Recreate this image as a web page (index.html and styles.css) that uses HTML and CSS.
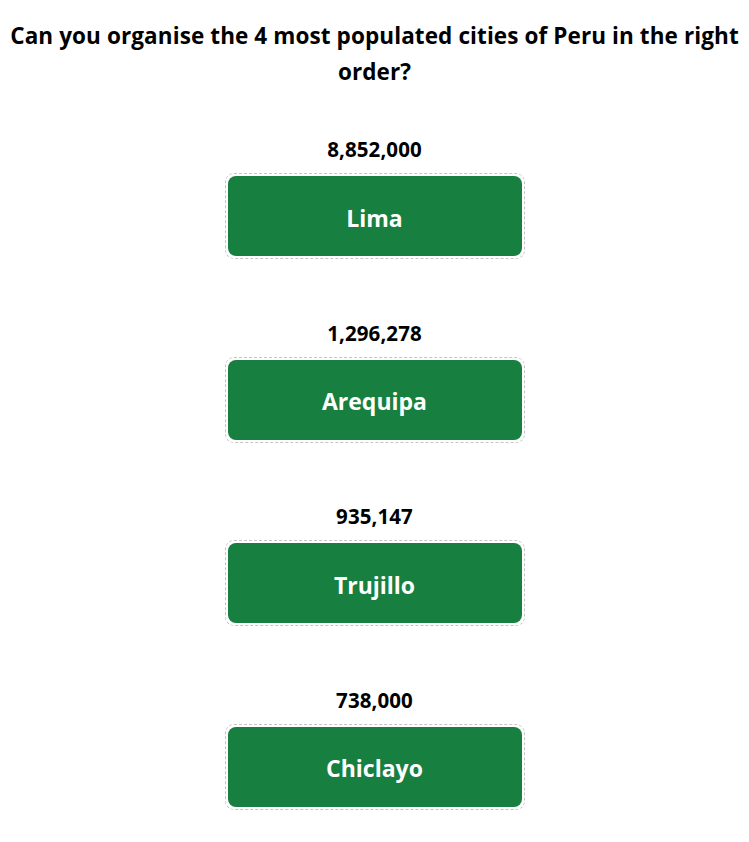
FILE: index.html
```html
<!DOCTYPE html>
<html lang="en">
<head>
  <meta charset="UTF-8">
  <meta name="viewport" content="width=device-width, initial-scale=1.0">
  <title>Peru Cities Quiz</title>
  <link rel="stylesheet" href="styles.css">
</head>
<body>

  <h2 class="question">Can you organise the 4 most populated cities of Peru in the right order?</h2>

  <div class="list">
    <div class="item">
      <div class="population">8,852,000</div>
      <div class="slot"><div class="city">Lima</div></div>
    </div>
    <div class="item">
      <div class="population">1,296,278</div>
      <div class="slot"><div class="city">Arequipa</div></div>
    </div>
    <div class="item">
      <div class="population">935,147</div>
      <div class="slot"><div class="city">Trujillo</div></div>
    </div>
    <div class="item">
      <div class="population">738,000</div>
      <div class="slot"><div class="city">Chiclayo</div></div>
    </div>
  </div>

</body>
</html>
```
FILE: styles.css
```css
body { font-family: "Open Sans", Arial, sans-serif; background-color: #fff; color: #000; margin: 0; padding: 0; }
.question { font-size: 22.5px; font-weight: 700; line-height: 36px; text-align: center; margin: 18px 4px 0; letter-spacing: 0.1px; }
.list { display: flex; flex-direction: column; align-items: center; margin-top: 47px; }
.item { display: flex; flex-direction: column; align-items: center; margin-bottom: 61.5px; }
.population { font-size: 20.5px; font-weight: 700; line-height: 24px; margin-bottom: 12px; letter-spacing: 0.1px; }
.slot { width: 300px; box-sizing: border-box; padding: 2px; border: 1px dashed #c4c4c4; border-radius: 9px; }
.city { height: 80px; box-sizing: border-box; padding-top: 3px; display: flex; align-items: center; justify-content: center; background-color: #177f3f; color: #fff; border-radius: 8px; font-size: 23px; font-weight: 700; }
```
